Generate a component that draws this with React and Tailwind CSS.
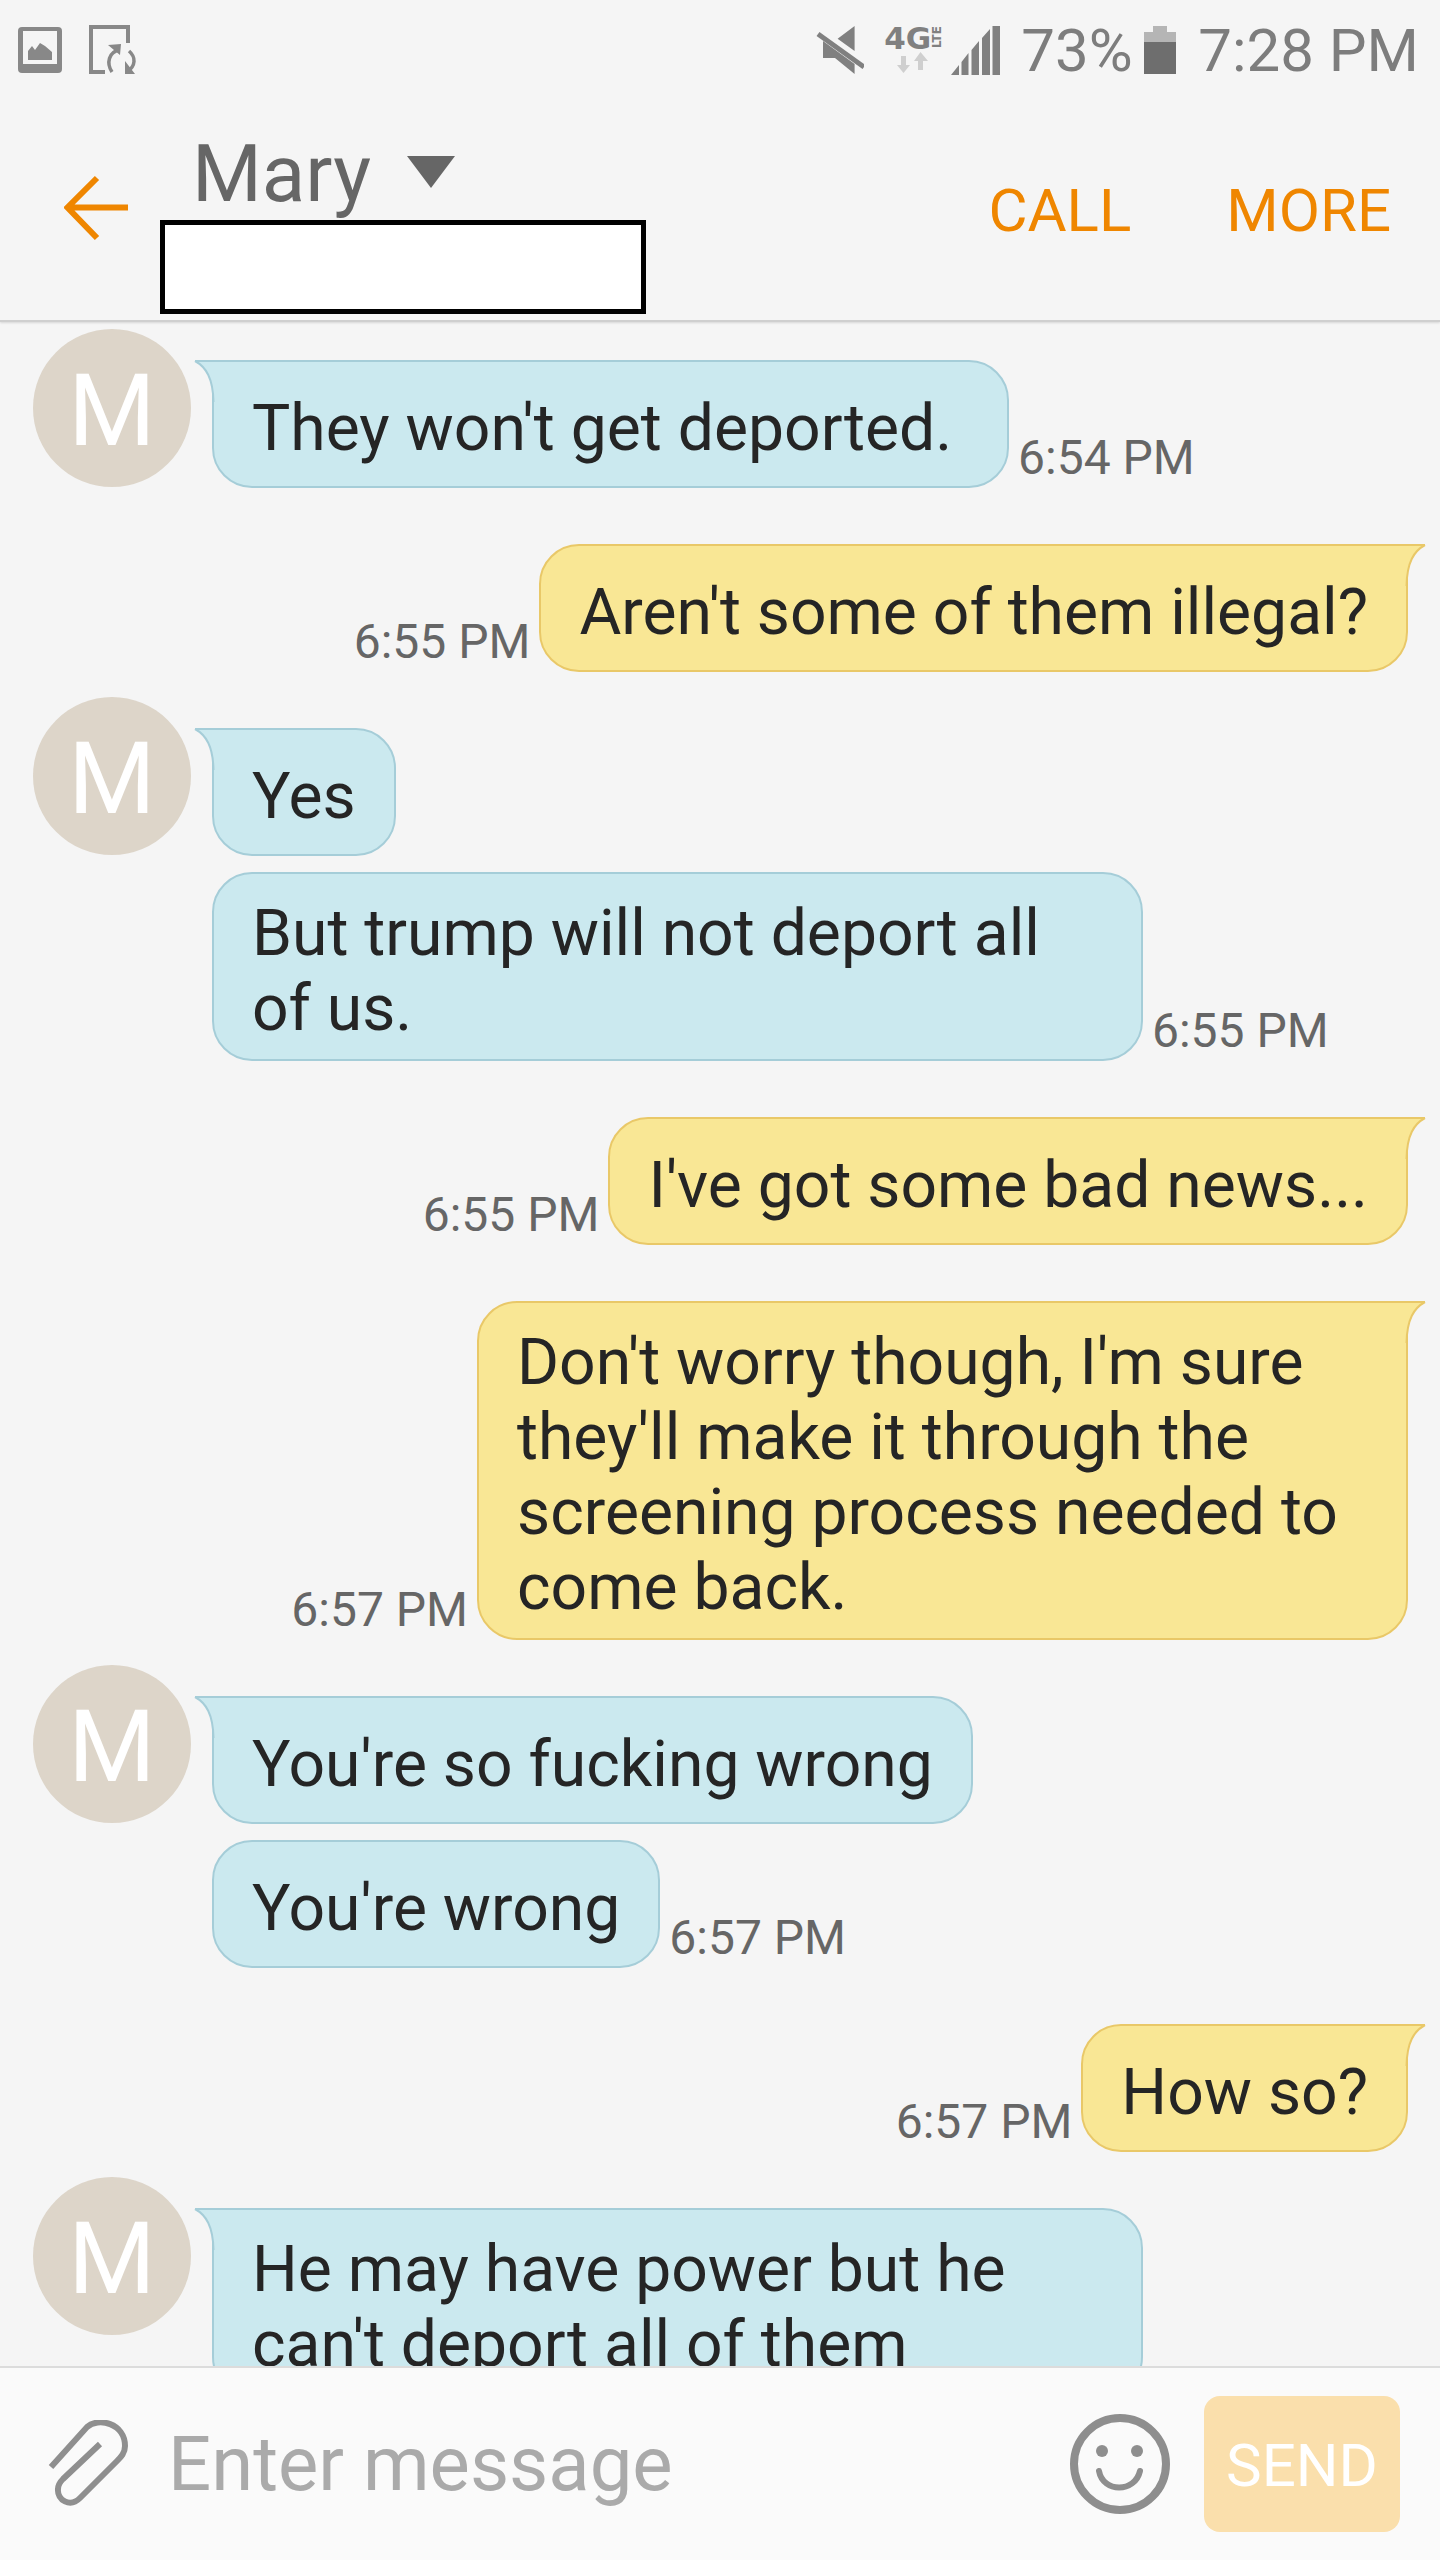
import React from "react";

// tail is drawn over the square corner of the bubble
const BubbleTail = ({ side, tone }) => {
  const fill = tone === "in" ? "#cbe9ef" : "#f9e795";
  const line = tone === "in" ? "#a5cdd8" : "#e9c868";
  if (side === "left") {
    return (
      <svg width="24" height="44" viewBox="0 0 24 44" className="absolute -left-[20px] -top-[2px]">
        <path d="M1 1 C12 7 19 18 19.5 42 L24 42 L24 1 Z" fill={fill} />
        <path d="M1 1 C12 7 19 18 19.5 42 M1 1 H24" fill="none" stroke={line} strokeWidth="2" />
      </svg>
    );
  }
  return (
    <svg width="24" height="44" viewBox="0 0 24 44" className="absolute -right-[20px] -top-[2px]">
      <path d="M23 1 C12 7 5 18 4.5 42 L0 42 L0 1 Z" fill={fill} />
      <path d="M23 1 C12 7 5 18 4.5 42 M23 1 H0" fill="none" stroke={line} strokeWidth="2" />
    </svg>
  );
};

const Time = ({ children, className }) => (
  <span className={`mb-[2px] text-[48px] leading-[56px] text-[#666666] whitespace-nowrap ${className}`}>{children}</span>
);

const Incoming = ({ text, time, tail, wide }) => (
  <div className="flex items-end">
    <div className={`relative min-h-[128px] max-w-[931px] flex items-center rounded-[40px] border-2 border-[#a5cdd8] bg-[#cbe9ef] pl-[38px] pt-[22px] pb-[13px] text-[64.2px] leading-[75px] text-[#252525] ${tail ? "rounded-tl-none" : ""} ${wide ? "pr-[55px]" : "pr-[38px]"}`}>
      {tail && <BubbleTail side="left" tone="in" />}
      <span>{text}</span>
    </div>
    {time && <Time className="ml-[9px]">{time}</Time>}
  </div>
);

const Outgoing = ({ text, time }) => (
  <div className="flex items-end justify-end pr-[32px]">
    <Time className="mr-[9px]">{time}</Time>
    <div className="relative min-h-[128px] max-w-[931px] flex items-center rounded-[40px] rounded-tr-none border-2 border-[#e9c868] bg-[#f9e795] px-[38px] pt-[22px] pb-[13px] text-[64.2px] leading-[75px] text-[#252525]">
      <BubbleTail side="right" tone="out" />
      <span>{text}</span>
    </div>
  </div>
);

const Avatar = () => (
  <div className="w-[158px] h-[158px] -mt-[31px] pt-[5px] shrink-0 rounded-full bg-[#ddd5c9] flex items-center justify-center text-[100px] leading-none text-white">
    M
  </div>
);

const Group = ({ children }) => (
  <div className="flex pl-[33px]">
    <Avatar />
    <div className="ml-[21px] flex flex-col gap-[16px]">{children}</div>
  </div>
);

const StatusBar = () => (
  <div className="h-[100px] flex items-center justify-between pl-[18px] pr-[21px] text-[#7d7d7d]">
    <div className="flex items-center">
      <svg width="44" height="46" viewBox="0 0 44 46">
        <rect width="44" height="46" rx="4" fill="#888888" />
        <rect x="5" y="4" width="34" height="33" fill="#f5f5f5" />
        <path d="M10 33 V24 L14 19 L17 23 L22 16 L27 19 L34 25 V33 Z" fill="#888888" />
      </svg>
      <svg width="48" height="50" viewBox="0 0 48 50" className="ml-[27px]" fill="none" stroke="#888888">
        <path d="M39 18 V2 H2 V47 H16" strokeWidth="4" />
        <path d="M23 47 C17 38 20 27 30 25 M40 26 C47 32 47 41 38 47" strokeWidth="3.5" />
        <path d="M19 20 L32 19 L31 30 Z M36 36 L36 49 L46 49 Z" fill="#888888" stroke="none" />
      </svg>
    </div>
    <div className="flex items-center text-[60px] leading-none">
      <svg width="48" height="48" viewBox="0 0 48 48">
        <path d="M21.6 12.7 L38.6 0 V25 Z M7 15 V32 H19 L38.6 48 V38 Z" fill="#808080" />
        <path d="M2 8 L48 41" stroke="#808080" strokeWidth="5" />
      </svg>
      <div className="ml-[20px] w-[59px] h-[48px] flex flex-col">
        <div className="flex items-start h-[24px] [font-family:'DejaVu_Sans',sans-serif] font-bold text-[#808080]">
          <span className="text-[31px] leading-[24px] w-[48px]">4G</span>
          <span className="text-[12px] leading-[11px] [writing-mode:vertical-rl] rotate-180">LTE</span>
        </div>
        <svg width="59" height="22" viewBox="0 0 59 22" className="mt-[2px]">
          <path d="M17 4 H22 V13 H26 L19.5 21 L13 13 H17 Z" fill="#cfcfcf" />
          <path d="M34 18 H39 V9 H44 L36.5 0 L30 9 H34 Z" fill="#cfcfcf" />
        </svg>
      </div>
      <svg width="49" height="49" viewBox="0 0 49 49" className="ml-[8px]">
        <path d="M0 49 L8 39 V49 Z M10.5 36 L17.5 27 V49 H10.5 Z M20.5 24 L28 15 V49 H20.5 Z M31 12 L39 3 V49 H31 Z M41.5 0 L49 -4 V49 H41.5 Z" fill="#808080" />
      </svg>
      <span className="ml-[21px] w-[108px] pt-[2px]">73%</span>
      <div className="ml-[15px] w-[32px] h-[48px] flex flex-col items-center">
        <div className="w-[14px] h-[6px] bg-[#b5b5b5]" />
        <div className="w-full h-[10px] bg-[#b5b5b5]" />
        <div className="w-full flex-1 bg-[#6e6e6e]" />
      </div>
      <span className="ml-[22px] pt-[2px]">7:28 PM</span>
    </div>
  </div>
);

const Header = () => (
  <div className="relative z-10 shrink-0 border-b-2 border-[#cfcfcf] bg-[#f5f5f5] shadow-[0_1px_2px_rgba(0,0,0,0.12)]">
    <StatusBar />
    <div className="h-[220px] flex">
      <svg width="64" height="66" viewBox="0 0 64 66" className="ml-[64px] mt-[75px]" fill="none" stroke="#ef8600" strokeWidth="6">
        <path d="M4 32.5 H64 M33 3 L3.5 32.5 L33 63" />
      </svg>
      <div className="ml-[32px] flex flex-col">
        <div className="ml-[32px] mt-[27px] h-[93px] flex items-start text-[80px] leading-[94px] text-[#666666]">
          <span>Mary</span>
          <div className="ml-[36px] mt-[29px] w-0 h-0 border-l-[24px] border-r-[24px] border-t-[32px] border-l-transparent border-r-transparent border-t-[#666666]" />
        </div>
        <div className="w-[486px] h-[94px] border-[5px] border-black bg-white" />
      </div>
      <div className="ml-auto pr-[49px] flex items-start pt-[76px] text-[60px] leading-[70px] text-[#ef8600]">
        <span>CALL</span>
        <span className="ml-[95px]">MORE</span>
      </div>
    </div>
  </div>
);

const Composer = () => (
  <div className="relative z-10 h-[194px] shrink-0 border-t-2 border-[#dcdcdc] bg-[#fafafa] flex items-center">
    <svg width="82" height="88" viewBox="0 0 82 88" className="ml-[48px]" fill="none" stroke="#8f8f8f" strokeWidth="6">
      <path d="M3 47 L39 7 C50 -3 77 3 77 26 C77 33 73 37 69 41 L32 78 C22 88 9 80 10 69 C10 65 12 62 15 59 L52 24" />
    </svg>
    <span className="ml-[38px] text-[76px] leading-none text-[#aaaaaa]">Enter message</span>
    <svg width="100" height="100" viewBox="0 0 100 100" className="ml-auto" fill="none" stroke="#8e8e8e">
      <circle cx="50" cy="50" r="46" strokeWidth="8" />
      <circle cx="32" cy="37" r="6" fill="#8e8e8e" stroke="none" />
      <circle cx="67" cy="37" r="6" fill="#8e8e8e" stroke="none" />
      <path d="M29 57 C33 79 65 79 70 57" strokeWidth="6" strokeLinecap="round" />
    </svg>
    <div className="ml-[34px] mr-[40px] w-[196px] h-[136px] pt-[3px] rounded-[16px] bg-[#fadfac] flex items-center justify-center text-[60px] leading-none text-white">
      SEND
    </div>
  </div>
);

export default function App() {
  return (
    <div className="h-[2560px] w-[1440px] flex flex-col overflow-hidden bg-[#f5f5f5] [font-family:Roboto,sans-serif]">
      <Header />
      <div className="flex-1 min-h-0 overflow-hidden pt-[38px] flex flex-col gap-[56px]">
        <Group>
          <Incoming tail wide text="They won't get deported." time="6:54 PM" />
        </Group>
        <Outgoing text="Aren't some of them illegal?" time="6:55 PM" />
        <Group>
          <Incoming tail text="Yes" />
          <Incoming text="But trump will not deport all of us." time="6:55 PM" />
        </Group>
        <Outgoing text="I've got some bad news..." time="6:55 PM" />
        <Outgoing text="Don't worry though, I'm sure they'll make it through the screening process needed to come back." time="6:57 PM" />
        <Group>
          <Incoming tail text="You're so fucking wrong" />
          <Incoming text="You're wrong" time="6:57 PM" />
        </Group>
        <Outgoing text="How so?" time="6:57 PM" />
        <Group>
          <Incoming tail text="He may have power but he can't deport all of them" />
        </Group>
      </div>
      <Composer />
    </div>
  );
}
